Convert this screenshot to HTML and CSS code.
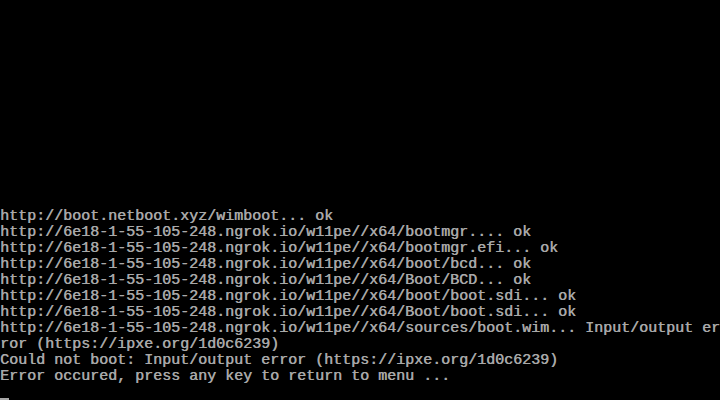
FILE: index.html
```html
<!DOCTYPE html>
<html>
<head>
<meta charset="utf-8">
<link rel="stylesheet" href="styles.css">
</head>
<body>
<div class="screen">
<pre class="console">http://boot.netboot.xyz/wimboot... ok
http://6e18-1-55-105-248.ngrok.io/w11pe//x64/bootmgr.... ok
http://6e18-1-55-105-248.ngrok.io/w11pe//x64/bootmgr.efi... ok
http://6e18-1-55-105-248.ngrok.io/w11pe//x64/boot/bcd... ok
http://6e18-1-55-105-248.ngrok.io/w11pe//x64/Boot/BCD... ok
http://6e18-1-55-105-248.ngrok.io/w11pe//x64/boot/boot.sdi... ok
http://6e18-1-55-105-248.ngrok.io/w11pe//x64/Boot/boot.sdi... ok
http://6e18-1-55-105-248.ngrok.io/w11pe//x64/sources/boot.wim... Input/output er
ror (https://ipxe.org/1d0c6239)
Could not boot: Input/output error (https://ipxe.org/1d0c6239)
Error occured, press any key to return to menu ...</pre>
<div class="cursor-row"><span class="cursor"></span></div>
</div>
</body>
</html>
```
FILE: styles.css
```css
html, body {
  margin: 0;
  padding: 0;
  background: #000;
}
.screen {
  width: 720px;
  height: 400px;
  display: flex;
  flex-direction: column;
  justify-content: flex-end;
  overflow: hidden;
  background: #000;
}
.console {
  margin: 0;
  padding-top: 1px;
  font-family: "Liberation Mono", monospace;
  font-size: 15px;
  line-height: 16px;
  color: #a8a8a8;
  white-space: pre;
  text-shadow: 0.5px 0 0 #a8a8a8;
}
.cursor-row {
  height: 15px;
  display: flex;
  align-items: flex-end;
}
.cursor {
  width: 9px;
  height: 2px;
  background: #a8a8a8;
}
```
